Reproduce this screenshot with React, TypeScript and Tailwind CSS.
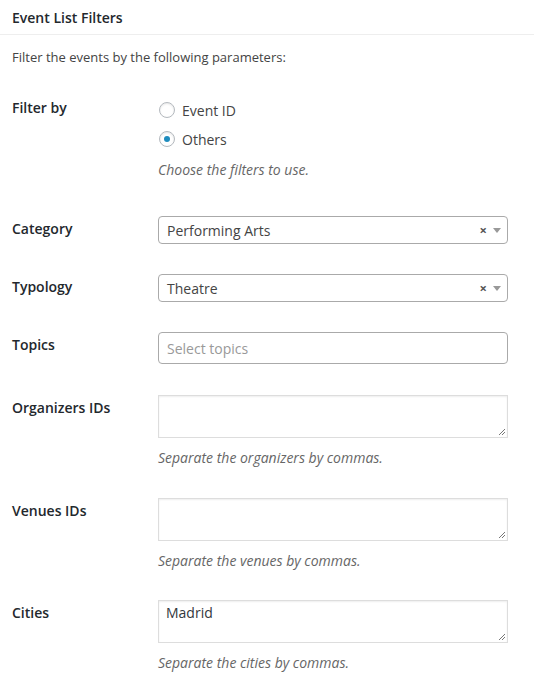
import React from "react";

const font = { fontFamily: '"Open Sans", "Noto Sans", sans-serif' };

function Label({ children }: { children: React.ReactNode }) {
  return <div className="text-[14px] font-semibold leading-5 text-[#23282d] pt-[3px]">{children}</div>;
}

function Radio({ label, checked }: { label: string; checked?: boolean }) {
  return (
    <label className="flex h-6 items-center">
      <span className="ml-[1px] flex h-4 w-4 items-center justify-center rounded-full border border-[#b4b9be] bg-white shadow-[inset_0_1px_2px_rgba(0,0,0,0.1)]">
        {checked && <span className="h-[6px] w-[6px] rounded-full bg-[#1e8cbe]" />}
      </span>
      <span className="ml-[7px] text-[14px] text-[#444]">{label}</span>
    </label>
  );
}

function Select({ value }: { value: string }) {
  return (
    <div className="flex h-[28px] w-[350px] items-center rounded-[4px] border border-[#aaa] bg-white pl-2 pr-[6px]">
      <span className="flex-1 text-[14px] text-[#444]">{value}</span>
      <span className="text-[13px] font-bold leading-none text-[#555]">×</span>
      <svg className="ml-[6px]" width="8" height="5" viewBox="0 0 8 5">
        <path d="M0 0h8L4 5z" fill="#999" />
      </svg>
    </div>
  );
}

function Hint({ children, className = "" }: { children: React.ReactNode; className?: string }) {
  return <p className={`text-[14px] italic leading-5 text-[#666] ${className}`}>{children}</p>;
}

function Textarea({ value, hint }: { value?: string; hint: string }) {
  return (
    <div>
      <div className="relative h-[43px] w-[350px] border border-[#ddd] bg-white px-[7px] pt-[2px] text-[14px] leading-5 text-[#32373c] shadow-[inset_0_1px_2px_rgba(0,0,0,0.07)]">
        {value}
        <svg className="absolute bottom-[2px] right-[2px]" width="7" height="7" viewBox="0 0 7 7">
          <path d="M1 7L7 1M4 7L7 4" stroke="#777" strokeWidth="1" />
        </svg>
      </div>
      <Hint className="mt-[10px]">{hint}</Hint>
    </div>
  );
}

export default function App() {
  return (
    <div className="min-h-screen bg-white" style={font}>
      <div className="flex h-[35px] items-center border-b border-[#eee] px-3">
        <h2 className="text-[14px] font-semibold text-[#23282d]">Event List Filters</h2>
      </div>
      <div className="px-3">
        <p className="mt-[12px] text-[13px] leading-5 text-[#444]">Filter the events by the following parameters:</p>

        <div className="mt-[31px] grid grid-cols-[146px_350px]">
          <div className="text-[14px] font-semibold leading-5 text-[#23282d]">Filter by</div>
          <div>
            <Radio label="Event ID" />
            <div className="mt-[5px]">
              <Radio label="Others" checked />
            </div>
            <Hint className="mt-[9px]">Choose the filters to use.</Hint>
          </div>
        </div>

        <div className="mt-[36px] grid grid-cols-[146px_350px]">
          <Label>Category</Label>
          <Select value="Performing Arts" />
        </div>

        <div className="mt-[30px] grid grid-cols-[146px_350px]">
          <Label>Typology</Label>
          <Select value="Theatre" />
        </div>

        <div className="mt-[30px] grid grid-cols-[146px_350px]">
          <Label>Topics</Label>
          <div className="flex h-[32px] w-[350px] items-center rounded-[4px] border border-[#aaa] bg-white px-2 text-[14px] text-[#999]">
            Select topics
          </div>
        </div>

        <div className="mt-[31px] grid grid-cols-[146px_350px]">
          <Label>Organizers IDs</Label>
          <Textarea hint="Separate the organizers by commas." />
        </div>

        <div className="mt-[30px] grid grid-cols-[146px_350px]">
          <Label>Venues IDs</Label>
          <Textarea hint="Separate the venues by commas." />
        </div>

        <div className="mt-[29px] grid grid-cols-[146px_350px]">
          <Label>Cities</Label>
          <Textarea value="Madrid" hint="Separate the cities by commas." />
        </div>
      </div>
    </div>
  );
}
